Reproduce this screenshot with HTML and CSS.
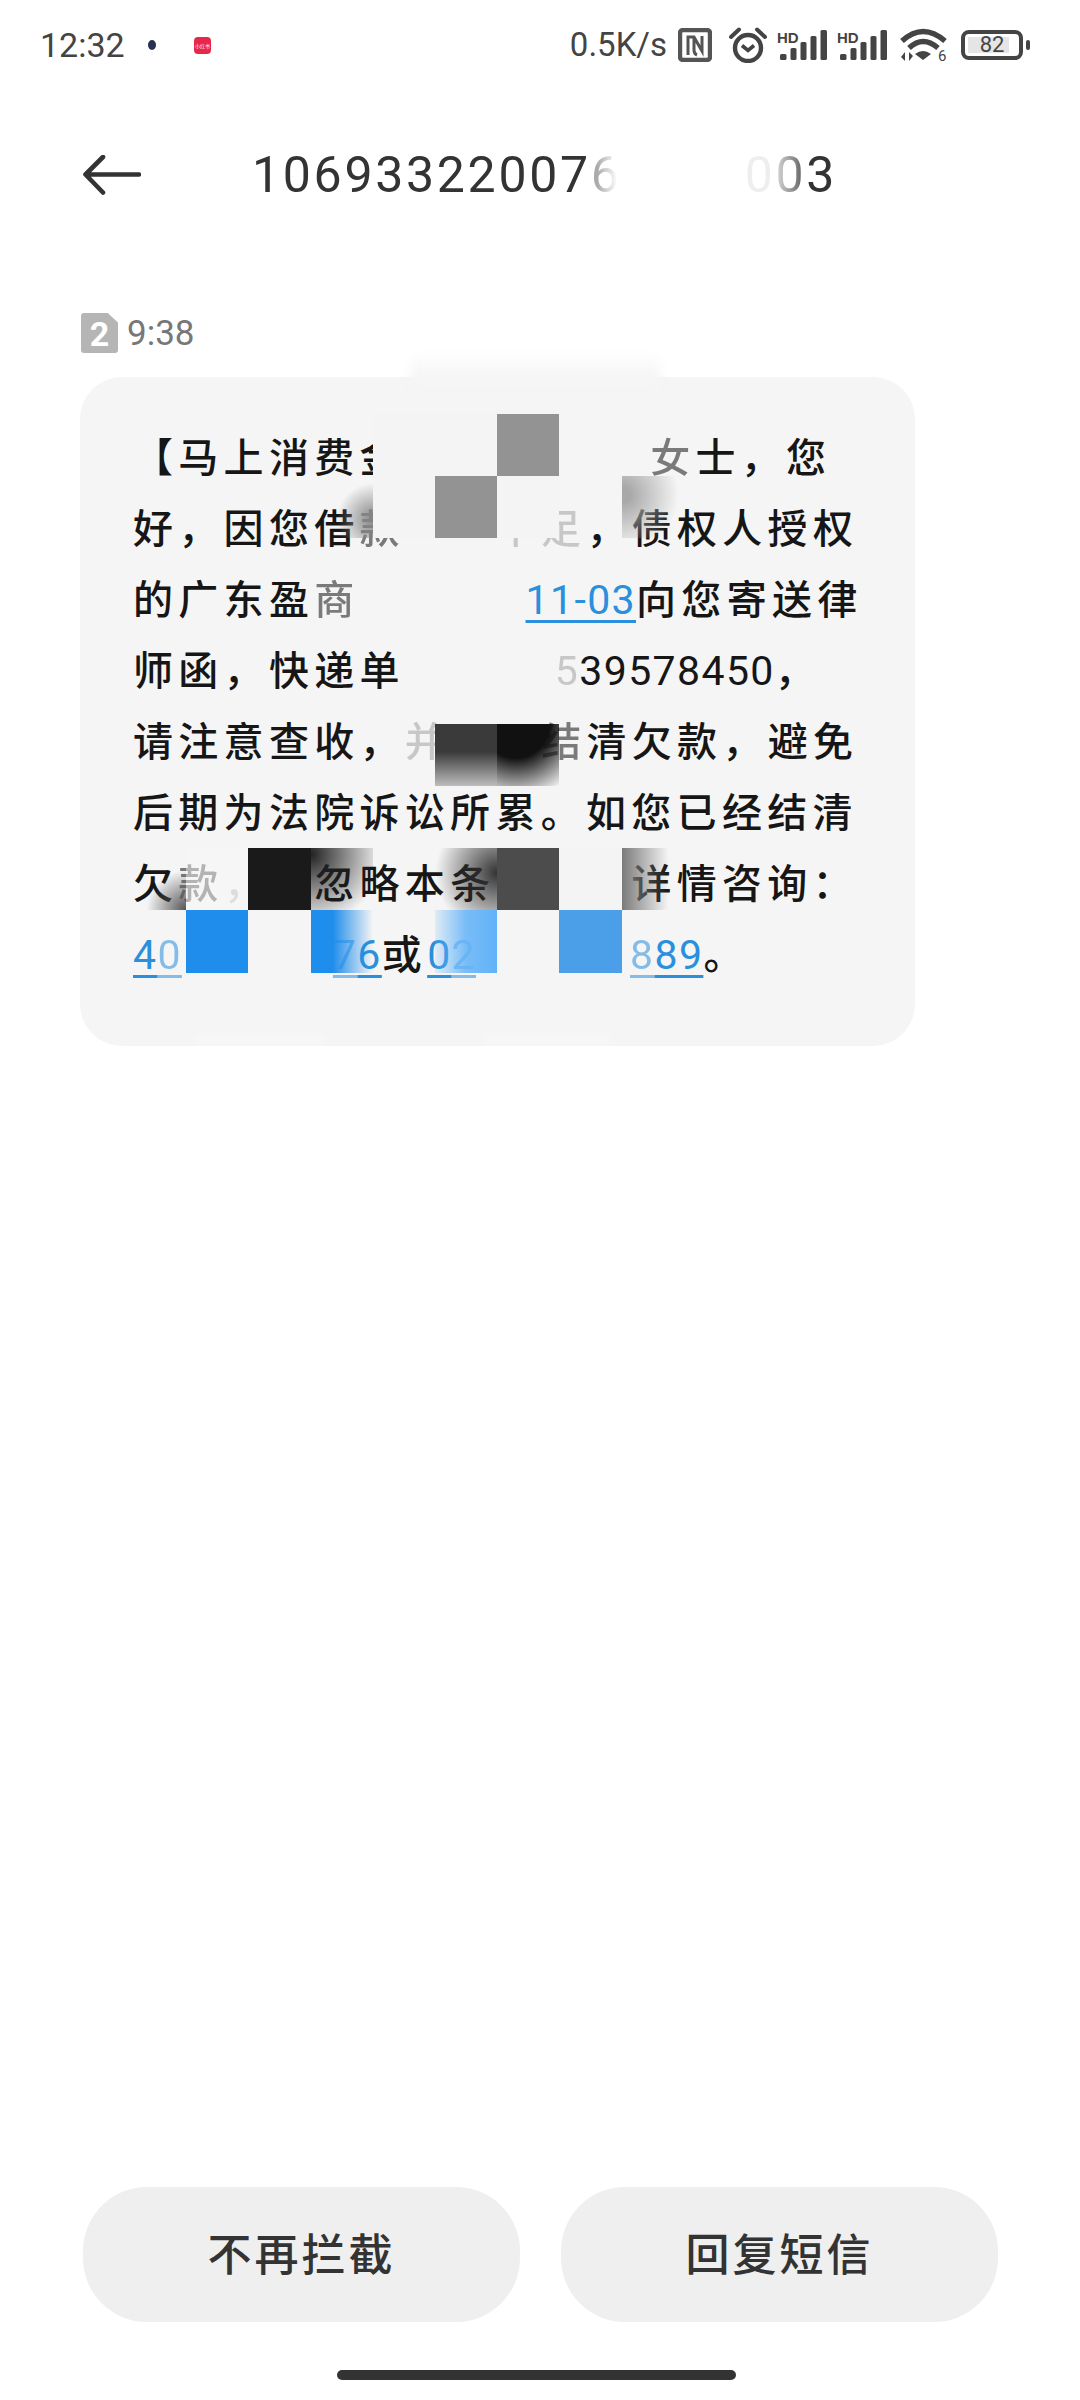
FILE: index.html
```html
<!DOCTYPE html>
<html lang="zh">
<head>
    <meta charset="UTF-8">
    <meta name="viewport" content="width=device-width, initial-scale=1.0">
    <title>短信详情</title>
    <link rel="stylesheet" href="styles.css">
</head>
<body>
    <div class="page">
        <!-- status bar -->
        <div class="status-bar">
            <div class="status-left">
                <span class="clock">12:32</span>
                <span class="notify-dot"></span>
                <span class="app-badge">小红书</span>
            </div>
            <div class="status-right">
                <span class="speed">0.5K/s</span>
                <svg class="icon-nfc" width="34" height="34" viewBox="0 0 34 34">
                    <rect x="2" y="2" width="30" height="30" rx="3" fill="none" stroke="#555" stroke-width="4.400"/>
                    <path d="M10 27V9h6l8 14V8M16 9v13q0 4 3 5" fill="none" stroke="#555" stroke-width="3"/>
                </svg>
                <svg class="icon-alarm" width="38" height="36" viewBox="0 0 38 36">
                    <circle cx="19" cy="21" r="13" fill="none" stroke="#444" stroke-width="4.400"/>
                    <path d="M13 18.500l6 5 6-5" fill="none" stroke="#444" stroke-width="3.600"/>
                    <path d="M2 10L10 2.500M36 10L28 2.500" fill="none" stroke="#444" stroke-width="4" stroke-linecap="round"/>
                </svg>
                <svg class="icon-signal" width="50" height="32" viewBox="0 0 50 32">
                    <text x="0" y="14" class="hd-label">HD</text>
                    <rect x="3" y="25" width="6.500" height="6" rx="1.500" fill="#444"/>
                    <rect x="13.500" y="19" width="6" height="12" rx="1.500" fill="#444"/>
                    <rect x="23.500" y="13" width="6" height="18" rx="1.500" fill="#444"/>
                    <rect x="33.500" y="7" width="6" height="24" rx="1.500" fill="#444"/>
                    <rect x="43.500" y="1" width="6.500" height="30" rx="1.500" fill="#444"/>
                </svg>
                <svg class="icon-signal" width="50" height="32" viewBox="0 0 50 32">
                    <text x="0" y="14" class="hd-label">HD</text>
                    <rect x="3" y="25" width="6.500" height="6" rx="1.500" fill="#444"/>
                    <rect x="13.500" y="19" width="6" height="12" rx="1.500" fill="#444"/>
                    <rect x="23.500" y="13" width="6" height="18" rx="1.500" fill="#444"/>
                    <rect x="33.500" y="7" width="6" height="24" rx="1.500" fill="#444"/>
                    <rect x="43.500" y="1" width="6.500" height="30" rx="1.500" fill="#444"/>
                </svg>
                <svg class="icon-wifi" width="47" height="34" viewBox="0 0 47 34">
                    <path d="M2 13Q23-6 45 13" fill="none" stroke="#444" stroke-width="5.400"/>
                    <path d="M9 20Q23 7 38 20" fill="none" stroke="#444" stroke-width="5.400"/>
                    <path d="M15 26q8-6 16 0l-8 6z" fill="#444"/>
                    <path d="M5 24v9l-4-4zM9 33v-9l4 4z" fill="#444"/>
                    <text x="38" y="33" class="wifi-label">6</text>
                </svg>
                <div class="battery">
                    <div class="battery-body">
                        <div class="battery-fill"></div>
                        <span class="battery-text">82</span>
                    </div>
                    <div class="battery-nub"></div>
                </div>
            </div>
        </div>

        <!-- title row -->
        <div class="top-bar">
            <svg class="back" width="58" height="40" viewBox="0 0 58 40">
                <path d="M56 19.500H3M20 2L2.500 19.500 20 37.500" fill="none" stroke="#333" stroke-width="4.600" stroke-linecap="round" stroke-linejoin="round"/>
            </svg>
            <div class="title">1069332200<span>7</span><span class="fade-right">6</span><span class="title-gap"></span><span class="fade-faint">0</span><span class="fade-left">0</span>3</div>
        </div>

        <!-- message -->
        <div class="msg-time">
            <div class="sim-badge">2</div>
            <span>9:38</span>
        </div>
        <div class="bubble">
            <div class="line">【马上消费金<span class="fade-light">融</span><span class="gap gap-name"></span><span class="fade-half">女</span>士，您</div>
            <div class="line">好，因您借<span class="fade-half">款</span><span class="gap gap-2"></span><span class="fade-light">不足</span>，债权人授权</div>
            <div class="line">的广东盈<span class="fade-half">商</span><span class="gap gap-date"></span><span class="num link">11-03</span>向您寄送律</div>
            <div class="line">师函，快递单<span class="gap gap-post"></span><span class="num"><span class="fade-light">5</span>39578450</span>，</div>
            <div class="line">请注意查收，<span class="fade-light">并</span><span class="gap gap-2"></span><span class="fade-half">结</span>清欠款，避免</div>
            <div class="line">后期为法院诉讼所累。如您已经结清</div>
            <div class="line">欠<span class="fade-half">款</span><span class="fade-light">，</span><span class="fade-half">可</span>忽略本条<span class="fade-light">短信</span><span class="fade-light">，</span>详情咨询：</div>
            <div class="line"><span class="num link">4<span class="fade-half">0</span></span><span class="gap gap-phone-a"></span><span class="num link"><span class="fade-half">7</span>6</span>或<span class="num link">0<span class="fade-half">2</span></span><span class="gap gap-phone-b"></span><span class="num link"><span class="fade-half">8</span>89</span>。</div>
        </div>

        <div class="bottom-bar">
            <button class="action">不再拦截</button>
            <button class="action">回复短信</button>
        </div>
        <div class="home-bar"></div>

        <!-- mosaic lying over the message -->
        <div class="smudge smudge-top"></div>
        <div class="smudge smudge-low-a"></div>
        <div class="smudge smudge-low-b"></div>
        <div class="mosaic">
            <div class="tile a1 pale"></div>
            <div class="tile a2 pale"></div>
            <div class="tile a3 grey"></div>
            <div class="tile b0 fade-to-grey"></div>
            <div class="tile b1 pale"></div>
            <div class="tile b2 grey"></div>
            <div class="tile b3 pale"></div>
            <div class="tile b5 grey-out"></div>
            <div class="tile c1 dark-mid"></div>
            <div class="tile c2 dark-round"></div>
            <div class="tile d0 corner-in"></div>
            <div class="tile d1 pale-thin"></div>
            <div class="tile d2 black"></div>
            <div class="tile d3 black-out"></div>
            <div class="tile d4 dark-in"></div>
            <div class="tile d5 dim"></div>
            <div class="tile d6 pale"></div>
            <div class="tile d7 dark-out"></div>
            <div class="tile e1 blue"></div>
            <div class="tile e3 blue-out"></div>
            <div class="tile e5 sky"></div>
            <div class="tile e7 blue-soft"></div>
        </div>
    </div>
</body>
</html>
```
FILE: styles.css
```css
* {
    box-sizing: border-box;
}
body {
    margin: 0;
    background-color: #fff;
    font-family: "Noto Sans CJK SC", sans-serif;
}
.page {
    position: relative;
    width: 1080px;
    height: 2400px;
    display: flex;
    flex-direction: column;
    overflow: hidden;
}

/* status bar */
.status-bar {
    height: 90px;
    padding: 0 50px 0 40px;
    display: flex;
    justify-content: space-between;
    align-items: center;
    color: #444;
    font-family: Roboto, sans-serif;
}
.status-left, .status-right {
    display: flex;
    align-items: center;
}
.clock {
    width: 108px;
    font-size: 34px;
}
.notify-dot {
    width: 8px;
    height: 10px;
    border-radius: 50%;
    background-color: #27324f;
}
.app-badge {
    width: 17px;
    height: 17px;
    margin-left: 38px;
    border-radius: 4px;
    background-color: #e8284a;
    color: #fff;
    font-family: "Noto Sans CJK SC", sans-serif;
    font-size: 5px;
    line-height: 17px;
    text-align: center;
    white-space: nowrap;
}
.speed {
    flex: none;
    font-size: 33px;
    line-height: 44px;
    margin-right: 11px;
    white-space: nowrap;
}
.icon-alarm {
    margin-left: 17px;
}
.icon-signal {
    margin-left: 10px;
}
.icon-wifi {
    margin-left: 13px;
}
.hd-label {
    font-family: "Liberation Sans", sans-serif;
    font-size: 15px;
    font-weight: bold;
    fill: #444;
}
.wifi-label {
    font-family: Roboto, sans-serif;
    font-size: 15px;
    fill: #444;
}
.battery {
    margin-left: 14px;
    display: flex;
    align-items: center;
    gap: 3px;
}
.battery-body {
    position: relative;
    width: 62px;
    height: 30px;
    border: 4px solid #444;
    border-radius: 8px;
    display: flex;
    align-items: center;
    justify-content: center;
}
.battery-fill {
    position: absolute;
    left: 3px;
    top: 3px;
    bottom: 3px;
    width: 41px;
    background-color: #e5e5e5;
}
.battery-text {
    position: relative;
    font-size: 22px;
    line-height: 1;
    color: #444;
}
.battery-nub {
    width: 4px;
    height: 10px;
    border-radius: 2px;
    background-color: #444;
}

/* title row */
.top-bar {
    height: 170px;
    padding-left: 83px;
    display: flex;
    align-items: center;
    gap: 111px;
}
.title {
    font-family: Roboto, sans-serif;
    font-size: 50px;
    letter-spacing: 2.7px;
    color: #333;
    white-space: nowrap;
}
.title-gap {
    display: inline-block;
    width: 123px;
}
.fade-right, .fade-left {
    color: transparent;
    -webkit-background-clip: text;
    background-clip: text;
}
.fade-right {
    background-image: linear-gradient(to right, #aaa 20%, #fff 85%);
}
.fade-left {
    background-image: linear-gradient(to right, #ddd, #555);
}
.fade-faint {
    opacity: 0.08;
}

/* message */
.msg-time {
    margin: 53px 0 0 81px;
    height: 40px;
    display: flex;
    align-items: center;
    gap: 9px;
    font-family: Roboto, sans-serif;
    font-size: 35px;
    color: #777;
}
.sim-badge {
    width: 37px;
    height: 40px;
    background-color: #b5b5b5;
    border-radius: 3px;
    clip-path: polygon(0 0, 72% 0, 100% 24%, 100% 100%, 0 100%);
    color: #fff;
    font-size: 34px;
    font-weight: 700;
    line-height: 42px;
    text-align: center;
}
.bubble {
    width: 835px;
    height: 669px;
    margin: 24px 0 0 80px;
    padding: 43px 0 0 53px;
    background-color: #f5f5f5;
    border-radius: 42px;
    color: #161616;
    font-size: 40px;
    font-weight: 500;
    letter-spacing: 5.3px;
}
.line {
    height: 71px;
    line-height: 71px;
    white-space: nowrap;
}
.num {
    font-family: Roboto, sans-serif;
    font-size: 41px;
    font-weight: 400;
    letter-spacing: 1.4px;
}
.link {
    color: #2a8fdc;
    text-decoration: underline;
    text-decoration-thickness: 3px;
    text-underline-offset: 6px;
}
.gap {
    display: inline-block;
}
.gap-name {
    width: 200px;
}
.gap-2 {
    width: 91px;
}
.gap-date {
    width: 166px;
}
.gap-post {
    width: 150px;
}
.gap-phone-a {
    width: 151px;
}
.gap-phone-b {
    width: 154px;
}
.fade-light {
    opacity: 0.2;
}
.fade-half {
    opacity: 0.55;
}

/* bottom buttons */
.bottom-bar {
    margin-top: auto;
    padding: 0 82px 0 83px;
    display: flex;
    justify-content: space-between;
}
.action {
    width: 437px;
    height: 135px;
    padding: 0 0 6px;
    border: none;
    border-radius: 64px;
    background-color: #efefef;
    color: #333;
    font-family: "Noto Sans CJK SC", sans-serif;
    font-size: 44px;
    font-weight: 500;
    letter-spacing: 3px;
}
.home-bar {
    width: 399px;
    height: 10px;
    margin: 48px 0 20px 337px;
    border-radius: 5px;
    background-color: #333;
}

/* mosaic */
.smudge {
    position: absolute;
    filter: blur(5px);
}
.smudge-top {
    left: 410px;
    top: 352px;
    width: 250px;
    height: 36px;
    background: linear-gradient(to bottom, #fff, #f5f5f5 70%);
}
.smudge-low-a, .smudge-low-b {
    top: 1037px;
    height: 5px;
    background-color: rgba(255, 255, 255, 0.6);
}
.smudge-low-a {
    left: 195px;
    width: 130px;
}
.smudge-low-b {
    left: 485px;
    width: 125px;
}
.mosaic {
    position: absolute;
    left: 124px;
    top: 414px;
    display: grid;
    grid-template-columns: repeat(9, 62.2px);
    grid-template-rows: repeat(7, 62px) 62px 63px 62px;
}
.a1 { grid-area: 1 / 5; }
.a2 { grid-area: 1 / 6; }
.a3 { grid-area: 1 / 7; }
.b0 { grid-area: 2 / 4; }
.b1 { grid-area: 2 / 5; }
.b2 { grid-area: 2 / 6; }
.b3 { grid-area: 2 / 7; }
.b5 { grid-area: 2 / 9; }
.c1 { grid-area: 6 / 6; }
.c2 { grid-area: 6 / 7; }
.d0 { grid-area: 8 / 1; }
.d1 { grid-area: 8 / 2; }
.d2 { grid-area: 8 / 3; }
.d3 { grid-area: 8 / 4; }
.d4 { grid-area: 8 / 6; }
.d5 { grid-area: 8 / 7; }
.d6 { grid-area: 8 / 8; }
.d7 { grid-area: 8 / 9; }
.e1 { grid-area: 9 / 2; }
.e3 { grid-area: 9 / 4; }
.e5 { grid-area: 9 / 6; }
.e7 { grid-area: 9 / 8; }
.pale {
    background-color: #f4f4f4;
}
.pale-thin {
    background-color: rgba(248, 248, 248, 0.45);
}
.grey {
    background-color: #939393;
}
.fade-to-grey {
    background: radial-gradient(circle at 100% 70%, #858585, rgba(245, 245, 245, 0) 48%);
}
.grey-out {
    background: radial-gradient(circle at 0 30%, #a8a8a8 10%, rgba(245, 245, 245, 0) 75%);
}
.dark-mid {
    background: linear-gradient(to bottom, #3a3a3a 45%, #bdbdbd);
}
.dark-round {
    background: radial-gradient(circle at 30% 0, #111 45%, rgba(245, 245, 245, 0) 100%);
}
.corner-in {
    background: radial-gradient(circle at 100% 100%, #555, rgba(245, 245, 245, 0) 45%);
}
.black {
    background-color: #1a1a1a;
}
.black-out {
    background: radial-gradient(circle at 0 10%, #222, rgba(245, 245, 245, 0) 85%);
}
.dark-in {
    background: radial-gradient(circle at 100% 40%, #333, rgba(245, 245, 245, 0) 85%);
}
.dim {
    background-color: #4c4c4c;
}
.dark-out {
    background: linear-gradient(to right, #7a7a7a, rgba(245, 245, 245, 0) 75%);
}
.blue {
    background-color: #1f8deb;
}
.blue-out {
    background: linear-gradient(to right, #1f8deb 35%, rgba(245, 245, 245, 0));
}
.sky {
    background: linear-gradient(to right, rgba(98, 178, 248, 0.15), rgba(98, 178, 248, 0.85) 50%, #62b2f8);
}
.blue-soft {
    background-color: #4a9fe8;
}
```
